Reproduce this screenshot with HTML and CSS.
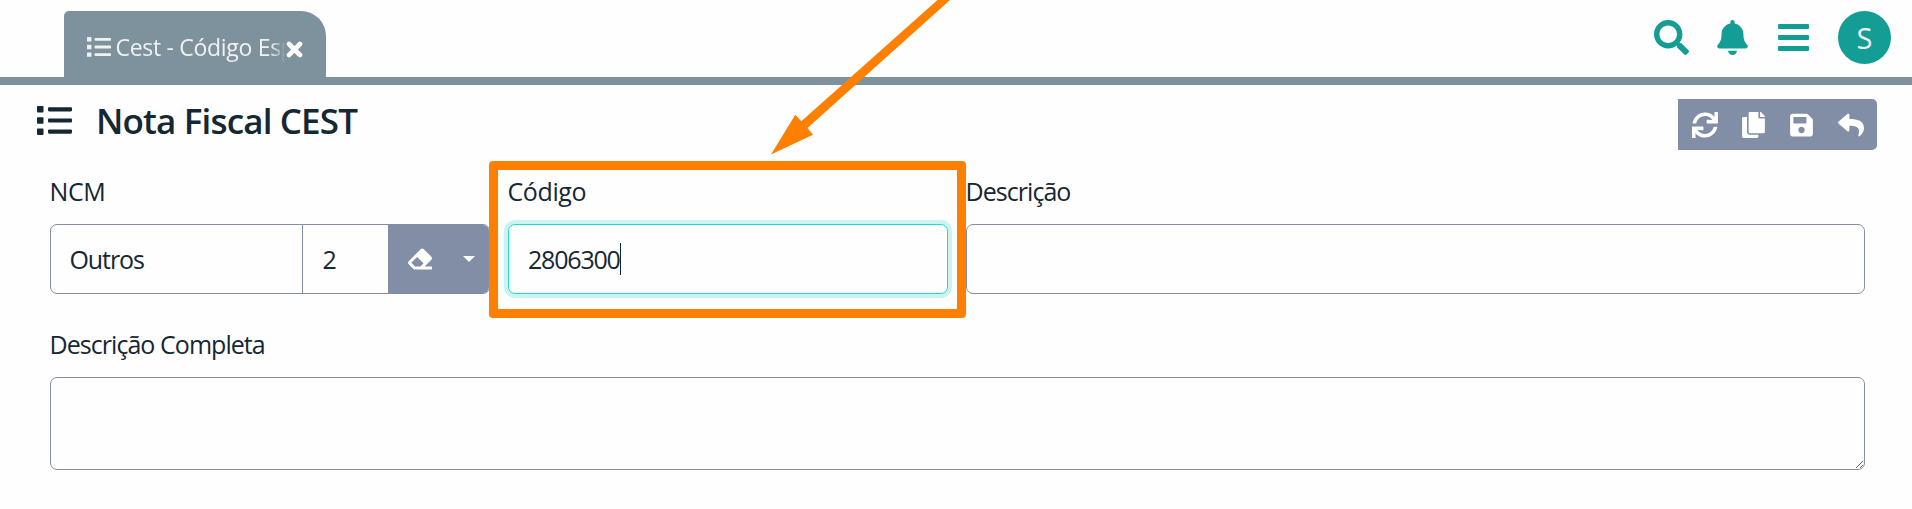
FILE: index.html
```html
<!DOCTYPE html>
<html lang="pt-BR">
<head>
<meta charset="utf-8">
<title>Nota Fiscal CEST</title>
<link rel="stylesheet" href="styles.css">
</head>
<body>
<svg class="sprite" width="0" height="0">
  <symbol id="list" viewBox="0 0 35 29"><path d="M.8 0h4.900q.8 0 .8.800v4.900q0 .8-.8.800H.800q-.8 0-.8-.8V.800Q0 0 .8 0zM.8 11.200h4.900q.8 0 .8.800v4.900q0 .8-.8.800H.800q-.8 0-.8-.8V12q0-.8.800-.8zM.8 22.400h4.900q.8 0 .8.800v4.900q0 .8-.8.800H.800q-.8 0-.8-.8v-4.900q0-.8.800-.8zM12.200 1.200h21.600q1.200 0 1.200 1.100v2q0 1.100-1.200 1.100H12.200Q11 5.400 11 4.300v-2q0-1.100 1.200-1.100zM12.200 12.400h21.600q1.200 0 1.200 1.100v2q0 1.100-1.200 1.100H12.200q-1.200 0-1.200-1.100v-2q0-1.100 1.200-1.100zM12.200 23.500h21.600q1.200 0 1.200 1.100v2q0 1.100-1.200 1.100H12.200q-1.200 0-1.200-1.100v-2q0-1.100 1.200-1.100z"/></symbol>
</svg>
<header class="topbar">
  <div class="tab">
    <svg class="tab-icon"><use href="#list"/></svg>
    <span class="tab-title">Cest - Código Esp</span>
    <svg class="tab-close" viewBox="0 0 17 17"><path d="M3 3l11 11M14 3L3 14"/></svg>
  </div>
  <nav class="actions">
    <svg class="i-search" viewBox="0 0 512 512"><path d="M505 442.700L405.300 343c-4.500-4.500-10.600-7-17-7H372c27.600-35.300 44-79.700 44-128C416 93.100 322.900 0 208 0S0 93.100 0 208s93.100 208 208 208c48.300 0 92.700-16.400 128-44v16.300c0 6.400 2.500 12.500 7 17l99.700 99.700c9.400 9.400 24.600 9.400 33.900 0l28.300-28.300c9.400-9.400 9.400-24.600.1-34zM208 336c-70.700 0-128-57.200-128-128 0-70.700 57.200-128 128-128 70.700 0 128 57.200 128 128 0 70.700-57.200 128-128 128z"/></svg>
    <svg class="i-bell" viewBox="0 0 448 512"><path d="M224 512c35.320 0 63.970-28.650 63.970-64H160.030c0 35.350 28.650 64 63.970 64zm215.390-149.710c-19.320-20.760-55.470-51.990-55.470-154.290 0-77.700-54.480-139.900-127.940-155.160V32c0-17.670-14.320-32-31.980-32s-31.980 14.330-31.980 32v20.840C118.560 68.100 64.080 130.300 64.080 208c0 102.300-36.150 133.530-55.470 154.290-6 6.450-8.660 14.160-8.610 21.710.11 16.400 12.980 32 32.100 32h383.800c19.120 0 32-15.600 32.100-32 .05-7.550-2.610-15.270-8.610-21.710z"/></svg>
    <svg class="i-menu" viewBox="0 0 31 27"><rect width="31" height="5" rx="1"/><rect y="11" width="31" height="5" rx="1"/><rect y="22" width="31" height="5" rx="1"/></svg>
    <span class="avatar">S</span>
  </nav>
</header>
<main>
  <div class="heading">
    <svg class="heading-icon"><use href="#list"/></svg>
    <h1>Nota Fiscal CEST</h1>
    <div class="toolbar">
      <svg class="i-sync" viewBox="0 0 512 512"><path d="M440.650 12.570l4 82.770A247.160 247.160 0 0 0 255.830 8C134.730 8 33.910 94.920 12.290 209.820A12 12 0 0 0 24.090 224h49.050a12 12 0 0 0 11.670-9.260 175.910 175.910 0 0 1 317-56.940l-101.460-4.860a12 12 0 0 0-12.570 12v47.410a12 12 0 0 0 12 12H500a12 12 0 0 0 12-12V12a12 12 0 0 0-12-12h-47.370a12 12 0 0 0-11.980 12.570zM255.830 432a175.610 175.610 0 0 1-146-77.800l101.800 4.870a12 12 0 0 0 12.570-12v-47.400a12 12 0 0 0-12-12H12a12 12 0 0 0-12 12V500a12 12 0 0 0 12 12h47.350a12 12 0 0 0 12-12.600l-4.150-82.570A247.170 247.170 0 0 0 255.830 504c121.110 0 221.930-86.920 243.550-201.820a12 12 0 0 0-11.800-14.180h-49.050a12 12 0 0 0-11.670 9.260A175.860 175.860 0 0 1 255.830 432z"/></svg>
      <svg class="i-copy" viewBox="0 0 448 512"><path d="M320 448v40c0 13.255-10.745 24-24 24H24c-13.255 0-24-10.745-24-24V120c0-13.255 10.745-24 24-24h72v296c0 30.879 25.121 56 56 56h168zm0-344V0H152c-13.255 0-24 10.745-24 24v368c0 13.255 10.745 24 24 24h272c13.255 0 24-10.745 24-24V128H344c-13.200 0-24-10.800-24-24zm120.971-31.029L375.029 7.029A24 24 0 0 0 358.059 0H352v96h96v-6.059a24 24 0 0 0-7.029-16.970z"/></svg>
      <svg class="i-save" viewBox="0 0 448 512"><path d="M433.941 129.941l-83.882-83.882A48 48 0 0 0 316.118 32H48C21.490 32 0 53.490 0 80v352c0 26.510 21.490 48 48 48h352c26.510 0 48-21.490 48-48V163.882a48 48 0 0 0-14.059-33.941zM224 416c-35.346 0-64-28.654-64-64 0-35.346 28.654-64 64-64s64 28.654 64 64c0 35.346-28.654 64-64 64zm96-304.520V212c0 6.627-5.373 12-12 12H76c-6.627 0-12-5.373-12-12V108c0-6.627 5.373-12 12-12h228.520c3.183 0 6.235 1.264 8.485 3.515l3.480 3.480A11.996 11.996 0 0 1 320 111.480z"/></svg>
      <svg class="i-reply" viewBox="0 0 512 512"><path d="M8.309 189.836L184.313 37.851C199.719 24.546 224 35.347 224 56.015v80.053c160.629 1.839 288 34.032 288 186.258 0 61.441-39.581 122.309-83.333 154.132-13.653 9.931-33.111-2.533-28.077-18.631 45.344-145.012-21.507-183.510-176.590-185.742V360c0 20.700-24.300 31.453-39.687 18.164l-176.004-152c-11.071-9.562-11.086-26.753 0-36.328z"/></svg>
    </div>
  </div>
  <form class="form">
    <div class="field">
      <span class="label ncm-label">NCM</span>
      <div class="group">
        <div class="cell cell-name">Outros</div>
        <div class="cell cell-code">2</div>
        <div class="group-btn">
          <svg class="i-eraser" viewBox="0 0 512 512"><path d="M497.941 273.941c18.745-18.745 18.745-49.137 0-67.882l-160-160c-18.745-18.745-49.136-18.746-67.883 0l-256 256c-18.745 18.745-18.745 49.137 0 67.882l96 96A48.004 48.004 0 0 0 144 480h356c6.627 0 12-5.373 12-12v-40c0-6.627-5.373-12-12-12H355.883l142.058-142.059zm-302.627-62.627l137.373 137.373L265.373 416H150.628l-80-80 124.686-124.686z"/></svg>
          <span class="caret"></span>
        </div>
      </div>
    </div>
    <div class="field">
      <span class="label codigo-label">Código</span>
      <div class="input focused"><span class="digits">2806300</span><span class="cursor"></span></div>
    </div>
    <div class="field">
      <span class="label">Descrição</span>
      <div class="input"></div>
    </div>
    <div class="field wide">
      <span class="label">Descrição Completa</span>
      <textarea class="area"></textarea>
    </div>
  </form>
</main>
<div class="highlight"></div>
<svg class="arrow" width="180" height="155" viewBox="771 0 180 155"><path d="M937.500 0H950L807.500 128l5.500 6.700L771 154.500l24.300-39.700 6 6.500z"/></svg>
</body>
</html>
```
FILE: styles.css
```css
* { box-sizing: border-box; }
body {
  margin: 0;
  height: 509px;
  overflow: hidden;
  position: relative;
  background: #fefefe;
  color: #152733;
  font-family: "Open Sans", "Noto Sans", sans-serif;
  font-size: 25px;
}
svg { display: block; flex: none; fill: currentColor; }
.sprite { position: absolute; }

.topbar {
  display: flex;
  justify-content: space-between;
  height: 85px;
  padding: 11px 21px 0 64px;
  border-bottom: 8px solid #7e929d;
}
.tab {
  display: flex;
  align-items: flex-start;
  width: 262px;
  height: 66px;
  padding-left: 22.500px;
  border-radius: 5px 25px 0 0;
  background: #7e929d;
  color: #f1f1f1;
}
.tab-icon { width: 24px; height: 20px; margin-top: 25.500px; }
.tab-title {
  width: 168px;
  margin: 19px 0 0 5px;
  white-space: nowrap;
  font-size: 23px;
  line-height: 34px;
  letter-spacing: -0.3px;
  -webkit-mask-image: linear-gradient(to right, #000 155px, transparent 170px);
  mask-image: linear-gradient(to right, #000 155px, transparent 170px);
}
.tab-close { width: 17px; height: 17px; margin: 30px 0 0 2px; stroke: #fff; stroke-width: 4.600; stroke-linecap: round; }

.actions { display: flex; color: #149d94; }
.i-search { width: 35px; height: 35px; margin: 9px 28px 0 0; }
.i-bell { width: 31px; height: 35px; margin: 9px 30px 0 0; }
.i-menu { width: 31px; height: 27px; margin: 13px 29px 0 0; }
.avatar {
  width: 53px;
  height: 53px;
  border-radius: 50%;
  background: #149d94;
  color: #f1f1f1;
  font-size: 29px;
  line-height: 54px;
  text-align: center;
}

.heading { display: flex; padding: 14px 35px 0 37px; height: 89px; }
.heading-icon { width: 35px; height: 29px; margin-top: 7px; }
h1 {
  flex: 1;
  margin: -1px 0 0 24px;
  font-size: 35px;
  font-weight: 600;
  line-height: 46px;
  letter-spacing: -0.850px;
}
.toolbar {
  display: flex;
  width: 199px;
  height: 51px;
  padding: 13px 0 0 14px;
  border-radius: 0 5px 5px 0;
  background: #828ea5;
  color: #fff;
}
.i-sync { width: 26px; height: 26px; margin-right: 24px; }
.i-copy { width: 23px; height: 26px; margin-right: 25px; }
.i-save { width: 23px; height: 26px; margin-right: 25px; }
.i-reply { width: 26px; height: 26px; }

.form {
  display: grid;
  grid-template-columns: 440px 440px 899px;
  column-gap: 18px;
  row-gap: 33px;
  padding-left: 50px;
}
.field { display: flex; flex-direction: column; }
.wide { grid-column: 1 / -1; }
.label { height: 50px; line-height: 34px; white-space: nowrap; letter-spacing: -0.950px; text-indent: -0.500px; }
.ncm-label { letter-spacing: -0.4px; }
.codigo-label { letter-spacing: -0.4px; }
.input, .group, .area {
  height: 70px;
  border: 1px solid #828ea5;
  border-radius: 7px;
  background: #fefefe;
}
.group { display: flex; overflow: hidden; }
.cell { line-height: 68px; }
.cell-name { width: 252px; padding-left: 18.500px; border-right: 1px solid #828ea5; letter-spacing: -1.1px; }
.cell-code { width: 85px; padding-left: 19.500px; }
.group-btn { flex: 1; display: flex; align-items: center; padding-left: 20px; background: #828ea5; color: #fff; }
.i-eraser { width: 24px; height: 24px; }
.caret { margin-left: 31px; border: 6px solid transparent; border-top-color: #fff; border-bottom: 0; }
.input { display: flex; align-items: center; padding-left: 19px; }
.focused { border-color: #23d8cc; box-shadow: 0 0 0 4px #c8f5f2; }
.digits { letter-spacing: -1.2px; }
.cursor { width: 1px; height: 32px; background: #152733; }
.area { display: block; width: 100%; height: 93px; resize: vertical; outline: none; }

.highlight {
  position: absolute;
  left: 489px;
  top: 161px;
  width: 477px;
  height: 157px;
  border: 9px solid #ff8000;
  border-radius: 4px;
}
.arrow { position: absolute; left: 771px; top: 0; fill: #ff8000; }
```
